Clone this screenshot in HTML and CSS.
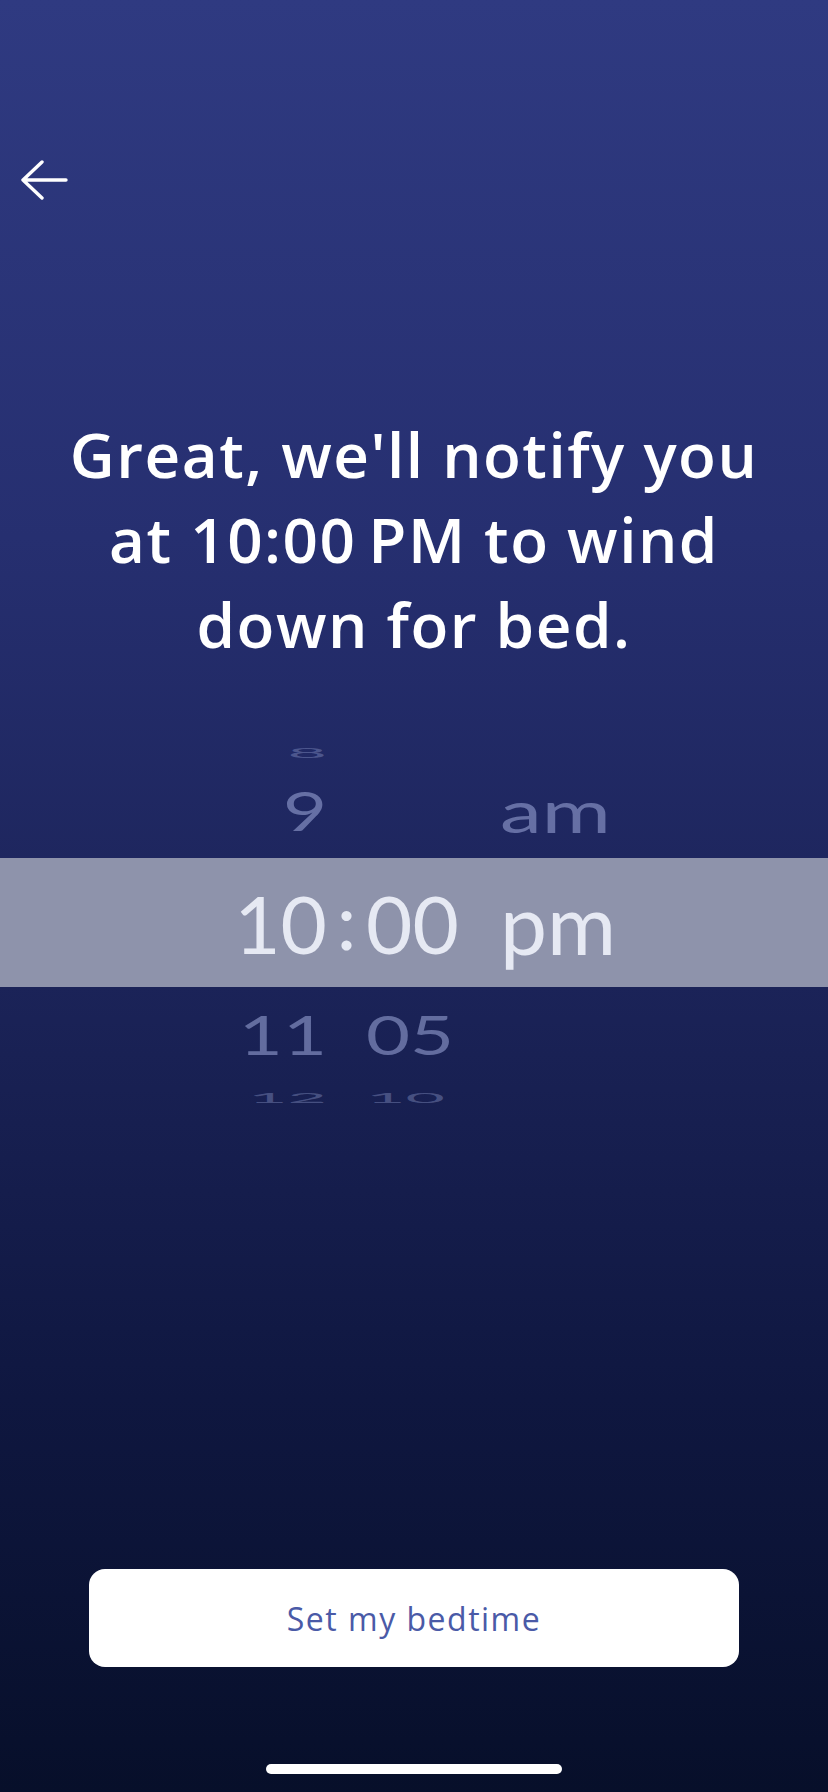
FILE: index.html
```html
<!DOCTYPE html>
<html lang="en">
<head>
  <meta charset="UTF-8">
  <title>Bedtime</title>
  <link rel="stylesheet" href="styles.css">
</head>
<body>
  <div class="screen">
    <div class="nav">
      <svg class="back" width="52" height="40" viewBox="0 0 52 40">
        <path d="M48 20 H5 M24 2 L5 20 L24 38" fill="none" stroke="#fff" stroke-width="3.4" stroke-linecap="round" stroke-linejoin="round"/>
      </svg>
    </div>

    <h1 class="title">Great, we'll notify you<br>at 10:00&#8201;PM to wind<br>down for bed.</h1>

    <div class="picker">
      <div class="row edge top-edge">
        <span class="h">8</span><span class="c"></span><span class="m"></span><span class="p"></span>
      </div>
      <div class="row near">
        <span class="h">9</span><span class="c"></span><span class="m"></span><span class="p">am</span>
      </div>
      <div class="row current">
        <span class="h">10</span><span class="c">:</span><span class="m">00</span><span class="p">pm</span>
      </div>
      <div class="row near below">
        <span class="h">11</span><span class="c"></span><span class="m">05</span><span class="p"></span>
      </div>
      <div class="row edge bottom-edge">
        <span class="h">12</span><span class="c"></span><span class="m">10</span><span class="p"></span>
      </div>
    </div>

    <button class="cta">Set my bedtime</button>
    <div class="home"></div>
  </div>
</body>
</html>
```

FILE: styles.css
```css
body { margin: 0; background: #070f2a; }
.screen {
  width: 828px;
  height: 1792px;
  display: flex;
  flex-direction: column;
  background: linear-gradient(180deg, #2f3a81 0%, #262f70 30%, #1b2358 55%, #0f1740 78%, #070f2a 100%);
  overflow: hidden;
}
.nav { padding: 160px 0 0 18px; height: 40px; }
.back { display: block; }

.title {
  margin: 212px 0 0;
  font-family: "Open Sans", "DejaVu Sans", sans-serif;
  font-weight: 600;
  font-size: 62px;
  line-height: 85px;
  letter-spacing: 1.5px;
  color: #fff;
  text-align: center;
}

.picker { margin-top: 75px; font-family: Lato, "Open Sans", sans-serif; }
.row {
  display: grid;
  grid-template-columns: 327px 39px 134px 1fr;
  grid-template-rows: minmax(0, 1fr);
  align-items: center;
  line-height: 1;
}
.row .h { text-align: right; }
.row .c { text-align: center; }
.row .m, .row .p { text-align: left; }

.edge { height: 22px; font-size: 68px; color: rgba(160, 172, 220, 0.35); }
.edge span { transform: scaleY(0.2); }
.bottom-edge { height: 30px; }
.near { height: 94px; font-size: 76px; color: rgba(160, 172, 220, 0.55); }
.near span { transform: scaleY(0.7); }
.near .p { font-size: 84px; }
.below { height: 96px; }
.current {
  height: 129px;
  background: #8e93ab;
  font-size: 80px;
  color: #e6e9f3;
}
.current .c { transform: translateY(-4px); }
.current .p { font-size: 84px; }

.cta {
  margin: auto 89px 0;
  height: 98px;
  border: none;
  border-radius: 16px;
  background: #fff;
  color: #4a5aa7;
  font-family: "Open Sans", "DejaVu Sans", sans-serif;
  font-size: 32px;
  font-weight: 500;
  letter-spacing: 1.5px;
}
.home {
  width: 296px;
  height: 10px;
  margin: 97px auto 18px;
  border-radius: 5px;
  background: #fff;
}
```
